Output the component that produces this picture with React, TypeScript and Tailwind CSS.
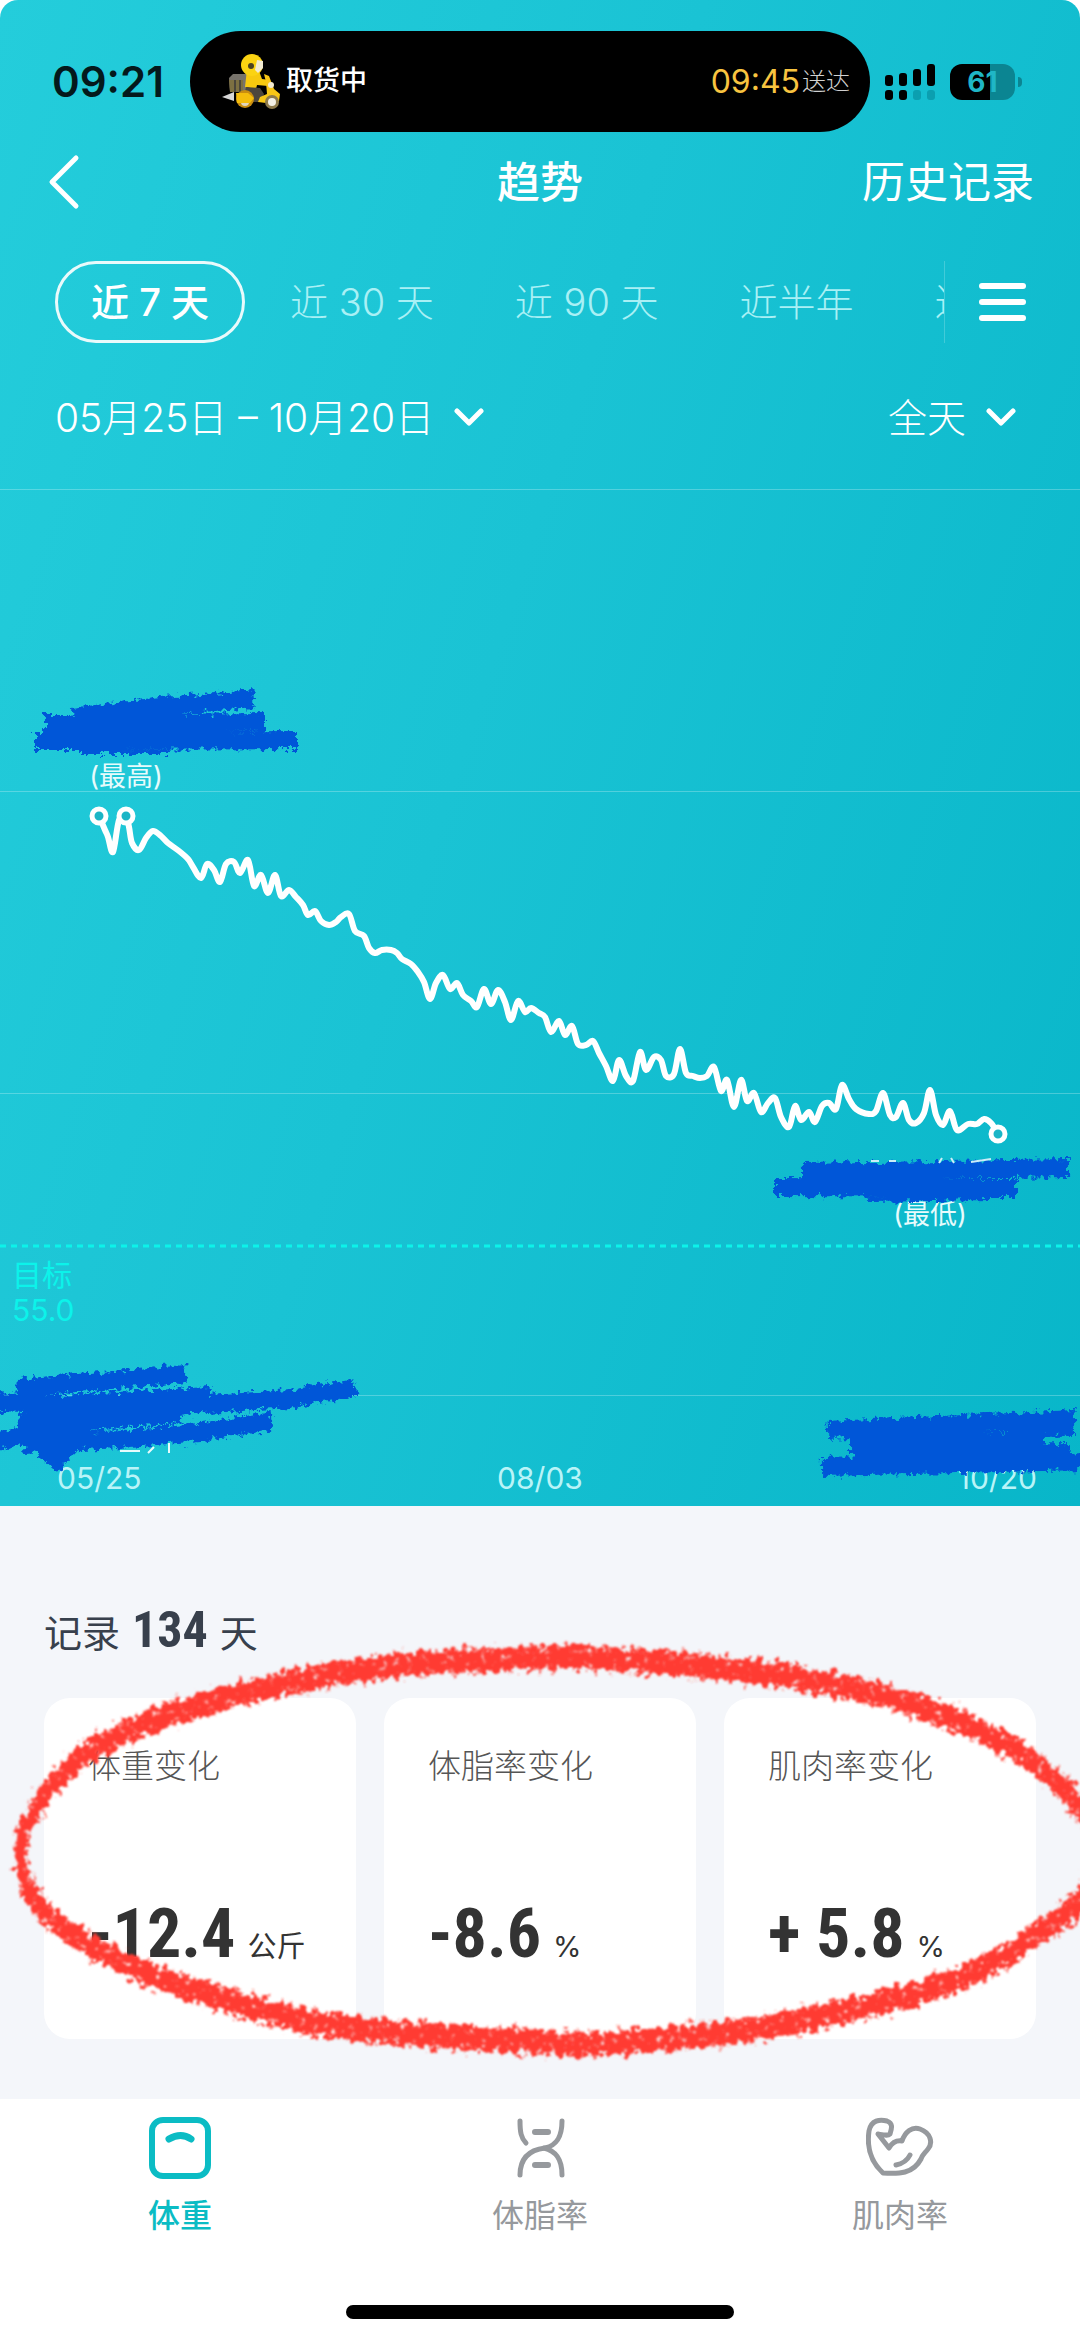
import { useState } from 'react'
import { clsx } from 'clsx'

type Point = [number, number]

const ranges = ['近 7 天', '近 30 天', '近 90 天', '近半年', '近一年']

const changes = [
  { label: '体重变化', value: '-12.4', unit: '公斤' },
  { label: '体脂率变化', value: '-8.6', unit: '%' },
  { label: '肌肉率变化', value: '+ 5.8', unit: '%' },
]

const weights: Point[] = [
  [99, 816], [105, 830], [108, 837], [113, 852], [119, 820], [126, 816], [129, 827], [132, 843],
  [139, 850], [146, 838], [153, 831], [161, 836], [168, 843], [179, 851], [188, 859], [193, 867],
  [201, 878], [207, 864], [214, 870], [220, 882], [226, 864], [234, 862], [240, 873], [248, 860],
  [254, 886], [261, 875], [268, 893], [275, 875], [281, 896], [289, 890], [296, 897], [303, 905],
  [308, 915], [315, 911], [321, 921], [329, 925], [336, 922], [341, 917], [349, 914], [355, 931],
  [364, 936], [369, 948], [375, 953], [382, 950], [391, 950], [397, 953], [402, 959], [411, 964],
  [418, 972], [424, 982], [430, 999], [436, 983], [443, 975], [450, 989], [457, 983], [463, 995],
  [471, 1001], [477, 1007], [484, 989], [491, 1004], [498, 990], [505, 1002], [511, 1020], [518, 1001],
  [525, 1012], [531, 1008], [539, 1013], [545, 1017], [551, 1032], [559, 1021], [565, 1035], [572, 1026],
  [578, 1044], [586, 1045], [593, 1041], [599, 1053], [606, 1066], [613, 1081], [619, 1060], [626, 1076],
  [633, 1081], [640, 1052], [646, 1070], [654, 1057], [661, 1060], [666, 1076], [674, 1074], [680, 1049],
  [686, 1073], [693, 1076], [700, 1078], [707, 1076], [714, 1067], [721, 1091], [727, 1080], [734, 1107],
  [741, 1080], [747, 1101], [754, 1093], [761, 1112], [768, 1103], [775, 1098], [781, 1117], [789, 1127],
  [795, 1106], [801, 1120], [809, 1112], [815, 1122], [822, 1106], [829, 1103], [836, 1109], [842, 1085],
  [849, 1099], [856, 1109], [869, 1114], [876, 1111], [883, 1093], [890, 1115], [896, 1117], [903, 1103],
  [909, 1120], [916, 1123], [924, 1113], [930, 1090], [936, 1115], [943, 1125], [950, 1111], [957, 1130],
  [968, 1124], [977, 1124], [984, 1119], [991, 1123], [998, 1134],
]

const circlePoints: Point[] = [
  [540, 11], [592, 11], [700, 15], [798, 21], [919, 35], [1022, 59], [1080, 86], [1096, 109],
  [1080, 132], [1032, 151], [970, 169], [884, 183], [747, 197], [592, 204], [540, 203], [413, 199],
  [310, 193], [207, 179], [138, 167], [69, 148], [34, 131], [20, 108], [36, 86], [71, 65],
  [121, 49], [190, 36], [310, 21], [413, 14], [540, 11],
]

// Catmull-Rom spline through the points
function smooth(points: Point[]) {
  let d = `M${points[0][0]} ${points[0][1]}`
  for (let i = 0; i < points.length - 1; i++) {
    const a = points[i - 1] ?? points[i]
    const b = points[i]
    const c = points[i + 1]
    const e = points[i + 2] ?? c
    d += `C${b[0] + (c[0] - a[0]) / 6} ${b[1] + (c[1] - a[1]) / 6} ${c[0] - (e[0] - b[0]) / 6} ${c[1] - (e[1] - b[1]) / 6} ${c[0]} ${c[1]}`
  }
  return d
}

function ChevronDown() {
  return (
    <svg viewBox="0 0 30 20" className="h-5 w-[30px] shrink-0" fill="none" stroke="currentColor" strokeWidth="5" strokeLinecap="round" strokeLinejoin="round" aria-hidden="true">
      <path d="M3 3l12 12L27 3" />
    </svg>
  )
}

function Scooter() {
  return (
    <svg viewBox="0 0 60 58" className="h-[58px] w-[60px] shrink-0" aria-hidden="true">
      <path d="M0 44l12-5v9z" fill="#d7d7d7" />
      <path d="M7 25l4-4h14v18H8z" fill="#77736b" />
      <path d="M7 27h14v12H8z" fill="#7d7042" />
      <path d="M13 27v12M18 27v12" stroke="#4b463b" strokeWidth="2" />
      <path d="M25 16l12 2 3 8 8 1-2 6-11-1-1 4-11-2z" fill="#f7c90f" />
      <path d="M24 34l14 1 4 6-3 8H26l-4-6z" fill="#4c463d" />
      <circle cx="23" cy="46" r="9" fill="#c98d10" />
      <circle cx="23" cy="49" r="4" fill="#e0d6bd" />
      <path d="M14 40h12l6 5-4 5H15z" fill="#f4bd0c" />
      <path d="M42 21l5 2 5 13 6 5-1 7-5 3-16-2 2-5 7-3-1-12z" fill="#f9c716" />
      <circle cx="50" cy="49" r="7" fill="#8e7b4c" />
      <circle cx="50" cy="49" r="4" fill="#f3f0e6" />
      <circle cx="49" cy="32" r="3" fill="#f4ead0" />
      <circle cx="30" cy="12" r="11" fill="#fbd312" />
      <path d="M35 7l6 1v7l-5 5-3-3z" fill="#f2ead2" />
      <circle cx="29" cy="13" r="3" fill="#4a4020" />
    </svg>
  )
}

function Signal() {
  return (
    <svg viewBox="0 0 50 36" className="h-9 w-[50px]" aria-hidden="true">
      <rect x="0" y="11" width="8" height="11" rx="3" />
      <rect x="14" y="9" width="8" height="13" rx="3" />
      <rect x="28" y="5" width="8" height="17" rx="3" />
      <rect x="42" y="0" width="8" height="22" rx="3" />
      <rect x="0" y="26" width="8" height="10" rx="3" />
      <rect x="14" y="26" width="8" height="10" rx="3" />
      <rect x="28" y="26" width="8" height="10" rx="3" fill="#0b9fb0" />
      <rect x="42" y="26" width="8" height="10" rx="3" fill="#0b9fb0" />
    </svg>
  )
}

function StatusBar() {
  return (
    <div className="flex items-center pt-[31px] pr-[58px] pl-[52px]">
      <span className="w-[138px] text-[42px] leading-none font-semibold text-[#04191c]">09:21</span>
      <div className="flex h-[101px] flex-1 items-center rounded-full bg-black pr-5 pl-8">
        <Scooter />
        <span className="ml-1 text-[27px] font-medium text-white">取货中</span>
        <span className="ml-auto text-[32px] text-[#f8c440]">09:45</span>
        <span className="ml-0.5 text-[24px] font-light text-[#d0d0d0]">送达</span>
      </div>
      <div className="ml-[15px] flex items-center">
        <Signal />
        <span className="ml-[15px] flex h-9 w-[65px] items-center justify-center rounded-[12px] bg-linear-to-r from-black from-62% to-[#0b8592] to-62% text-[28px] font-bold text-[#1fb6c6]">
          61
        </span>
        <span className="ml-[3px] h-2.5 w-1 rounded-r-full bg-[#0b8592]" />
      </div>
    </div>
  )
}

function TrendChart() {
  return (
    <svg viewBox="0 489 1080 1017" className="block w-full" role="img" aria-label="体重趋势">
      <defs>
        <filter id="marker" x="-10%" y="-40%" width="120%" height="180%">
          <feTurbulence type="fractalNoise" baseFrequency="0.18" numOctaves="4" seed="4" result="noise" />
          <feDisplacementMap in="SourceGraphic" in2="noise" scale="12" xChannelSelector="R" yChannelSelector="G" />
          <feGaussianBlur stdDeviation="0.6" />
        </filter>
      </defs>
      <g stroke="#fff" strokeOpacity="0.25">
        <path d="M0 489.500H1080M0 791.500H1080M0 1093.500H1080M0 1395.500H1080" />
      </g>
      <path d="M0 1246H1080" stroke="#0cf3ea" strokeWidth="3" strokeDasharray="6 5" />

      <path d={smooth(weights)} fill="none" stroke="#fff" strokeWidth="6" strokeLinecap="round" strokeLinejoin="round" />
      <g fill="#1bb5c6" stroke="#fff" strokeWidth="5">
        <circle cx="99" cy="816" r="7" />
        <circle cx="126" cy="816" r="7" />
        <circle cx="998" cy="1134" r="7" />
      </g>

      <g fill="#e6fbfc" fontSize="27" textAnchor="middle">
        <text x="126" y="786">(最高)</text>
        <text x="930" y="1224">(最低)</text>
      </g>
      <g fill="#0cf3ea" fontSize="30">
        <text x="12" y="1286">目标</text>
        <text x="12" y="1321">55.0</text>
      </g>
      <g fill="#b9f4f8" fontSize="30">
        <text x="57" y="1489">05/25</text>
        <text x="540" y="1489" textAnchor="middle">08/03</text>
        <text x="1037" y="1489" textAnchor="end">10/20</text>
      </g>

      <g stroke="#e6fbfc" strokeWidth="2">
        <path d="M120 1451h20M148 1453l6-6M169 1443v10" />
      </g>
      <g filter="url(#marker)" fill="none" stroke="#0257d8" strokeWidth="18" strokeLinejoin="round">
        <path d="M72 717L162 706 254 699M45 724L265 722M34 741L297 740M80 745L170 745" />
        <path d="M802 1172L1068 1168M774 1187L1017 1188M870 1193L990 1191" />
        <path d="M17 1388L90 1382 186 1374M-8 1402L60 1404 210 1396M-8 1443L60 1427 210 1402M208 1404L290 1399 356 1387M20 1410L170 1405M24 1444L120 1439 200 1432 272 1421M20 1426L180 1414" />
        <path d="M30 1444l28 26 18-22z" fill="#0257d8" strokeWidth="4" />
        <path d="M828 1430L940 1425 1075 1419M850 1444L1044 1440M822 1467L1090 1461M1010 1426L1074 1427M855 1456L1070 1453" />
      </g>
      <g stroke="#c9eef8" strokeWidth="2">
        <path d="M871 1161h8M889 1161h7M939 1163l3-5M951 1158l3 5M971 1162l20-3" />
      </g>
    </svg>
  )
}

function RedCircle() {
  return (
    <svg viewBox="0 0 1080 440" className="pointer-events-none absolute inset-x-0 top-[130px] w-full" aria-hidden="true">
      <defs>
        <filter id="crayon" x="-2%" y="-5%" width="104%" height="110%">
          <feTurbulence type="fractalNoise" baseFrequency="0.16" numOctaves="4" seed="9" result="noise" />
          <feDisplacementMap in="SourceGraphic" in2="noise" scale="20" xChannelSelector="R" yChannelSelector="G" result="rough" />
          <feColorMatrix in="noise" type="matrix" values="0 0 0 0 0  0 0 0 0 0  0 0 0 0 0  0 0 4 0 -0.5" result="grain" />
          <feComposite in="rough" in2="grain" operator="in" />
          <feGaussianBlur stdDeviation="0.8" />
        </filter>
      </defs>
      <g filter="url(#crayon)">
        <g transform="scale(1 2)">
          <path d={smooth(circlePoints)} fill="none" stroke="#ff3b30" strokeWidth="12" />
        </g>
      </g>
    </svg>
  )
}

function ScaleIcon() {
  return (
    <svg viewBox="0 0 68 62" className="h-[62px] w-[68px]" fill="none" stroke="currentColor" strokeWidth="6" strokeLinecap="round" aria-hidden="true">
      <rect x="6" y="3" width="56" height="56" rx="11" />
      <path d="M23 22q12-7 22 0" strokeWidth="7" />
    </svg>
  )
}

function FatIcon() {
  return (
    <svg viewBox="0 0 68 62" className="h-[62px] w-[68px]" fill="none" stroke="currentColor" strokeWidth="5" strokeLinecap="round" aria-hidden="true">
      <path d="M14 4C14 15 15 21 20 26" />
      <path d="M56 4C56 18 52 28 39 31C23 33 14 41 14 58" />
      <path d="M38 31C50 34 56 42 56 58" />
      <path d="M29 15h13M29 48h13" strokeWidth="6" />
    </svg>
  )
}

function MuscleIcon() {
  return (
    <svg viewBox="0 0 68 62" className="h-[62px] w-[68px]" fill="none" stroke="currentColor" strokeWidth="5" strokeLinecap="round" strokeLinejoin="round" aria-hidden="true">
      <path d="M17 56C4 44 1 28 3 14C5 3 14 2 21 4C27 6 26 11 24 17C22 19 18 18 12 17L23 31C26 26 30 23 36 24C39 15 46 9 54 12C65 16 67 26 62 32C58 37 56 38 55 42C47 57 33 57 17 56Z" />
      <path d="M30 48Q40 46 44 38" />
    </svg>
  )
}

const metrics = [
  { label: '体重', Icon: ScaleIcon },
  { label: '体脂率', Icon: FatIcon },
  { label: '肌肉率', Icon: MuscleIcon },
]

export default function App() {
  const [range, setRange] = useState(ranges[0])
  const [metric, setMetric] = useState('体重')

  return (
    <div className="flex min-h-screen flex-col overflow-hidden bg-white font-[Inter,'Noto_Sans_CJK_SC',sans-serif]">
      <header className="rounded-t-[18px] bg-linear-[108deg,#24cddb,#1ac3d4_45%,#08b6c9] text-white">
        <StatusBar />

        <div className="grid grid-cols-[1fr_auto_1fr] items-center px-[46px] pt-[18px]">
          <button type="button" aria-label="返回" className="justify-self-start">
            <svg viewBox="0 0 34 56" className="h-14 w-[34px]" fill="none" stroke="currentColor" strokeWidth="5" strokeLinecap="round" strokeLinejoin="round" aria-hidden="true">
              <path d="M30 4L6 28l24 24" />
            </svg>
          </button>
          <h1 className="text-[43px] leading-[64px] font-medium">趋势</h1>
          <a href="#history" className="justify-self-end text-[43px] leading-[64px] whitespace-nowrap">
            历史记录
          </a>
        </div>

        <div className="mt-[47px] flex items-center pr-[54px] pl-[55px]">
          <div className="flex flex-1 gap-[9px] overflow-hidden border-r border-white/20">
            {ranges.map((item) => (
              <button
                key={item}
                type="button"
                onClick={() => setRange(item)}
                aria-pressed={item === range}
                className={clsx(
                  'h-[82px] shrink-0 rounded-full border-3 px-[33px] text-[38px] leading-none',
                  item === range ? 'border-white/90 font-medium' : 'border-transparent font-light text-[#a9f0f5]'
                )}
              >
                {item}
              </button>
            ))}
          </div>
          <button type="button" aria-label="更多" className="ml-[34px] flex w-[47px] flex-col gap-[10px]">
            <span className="h-[6px] rounded-full bg-white" />
            <span className="h-[6px] rounded-full bg-white" />
            <span className="h-[6px] rounded-full bg-white" />
          </button>
        </div>

        <div className="flex h-[146px] items-center justify-between pt-1 pr-[64px] pl-[55px] text-[39px] font-light">
          <button type="button" className="flex items-center gap-5">
            05月25日 – 10月20日
            <ChevronDown />
          </button>
          <label className="flex items-center gap-5">
            <select aria-label="时段" className="field-sizing-content appearance-none bg-transparent">
              <option>全天</option>
            </select>
            <ChevronDown />
          </label>
        </div>

        <TrendChart />
      </header>

      <main className="relative bg-[#f4f6fa] px-11 pt-[88px] pb-[60px]">
        <p className="flex h-[72px] items-baseline gap-3 text-[38px] text-[#38404c]">
          记录
          <strong className="font-['Roboto_Condensed',Roboto] text-[50px] leading-[72px]">134</strong>
          天
        </p>
        <div className="mt-8 grid grid-cols-3 gap-7">
          {changes.map(({ label, value, unit }) => (
            <section key={label} className="h-[341px] rounded-[26px] bg-white px-11 pt-[44px]">
              <h2 className="text-[33px] leading-[48px] font-light text-[#555]">{label}</h2>
              <p className="mt-24 flex items-baseline gap-3 whitespace-nowrap text-[#333]">
                <strong className="font-['Roboto_Condensed',Roboto] text-[68px] leading-[96px]">{value}</strong>
                <span className="text-[29px]">{unit}</span>
              </p>
            </section>
          ))}
        </div>
        <RedCircle />
      </main>

      <nav className="grid grid-cols-3 pt-[18px]">
        {metrics.map(({ label, Icon }) => (
          <button
            key={label}
            type="button"
            onClick={() => setMetric(label)}
            className={clsx(
              'flex flex-col items-center gap-[13px] text-[32px] leading-[48px]',
              label === metric ? 'font-medium text-[#0bbcc4]' : 'text-[#96999d]'
            )}
          >
            <Icon />
            {label}
          </button>
        ))}
      </nav>
      <div className="mx-auto mt-auto mb-[22px] h-[14px] w-[36%] rounded-full bg-black" />
    </div>
  )
}
